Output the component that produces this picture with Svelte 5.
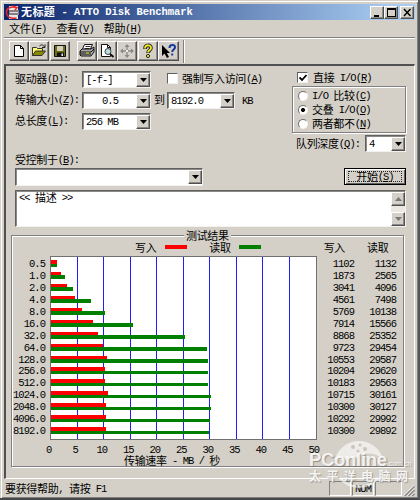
<script lang="ts">
  interface Result {
    size: string;
    write: number;
    read: number;
  }

  const results: Result[] = [
    { size: '0.5', write: 1102, read: 1132 },
    { size: '1.0', write: 1873, read: 2565 },
    { size: '2.0', write: 3041, read: 4096 },
    { size: '4.0', write: 4561, read: 7498 },
    { size: '8.0', write: 5769, read: 10138 },
    { size: '16.0', write: 7914, read: 15566 },
    { size: '32.0', write: 8868, read: 25352 },
    { size: '64.0', write: 9723, read: 29454 },
    { size: '128.0', write: 10553, read: 29587 },
    { size: '256.0', write: 10204, read: 29620 },
    { size: '512.0', write: 10183, read: 29563 },
    { size: '1024.0', write: 10715, read: 30161 },
    { size: '2048.0', write: 10300, read: 30127 },
    { size: '4096.0', write: 10292, read: 29992 },
    { size: '8192.0', write: 10300, read: 29892 }
  ];

  const ticks = [0, 5, 10, 15, 20, 25, 30, 35, 40, 45, 50];
  const ioModes = ['I/O 比较(&C)', '交叠 I/O(&O)', '两者都不(&N)'];

  let mode = $state(1);
  let direct = $state(true);
  let force = $state(false);

  // splits a caption into CJK runs, latin runs and &X accelerators
  function runs(s: string) {
    return s.match(/&.|[\u3000-\u9fff\uff00-\uffef]+|[^&\u3000-\u9fff\uff00-\uffef]+/g) ?? [];
  }

  const barWidth = (v: number) => `${(v / 50000) * 100}%`;
</script>

{#snippet txt(s: string)}
  <span class="txt">{#each runs(s) as r}{#if r[0] === '&'}<span class="lat key">{r[1]}</span>{:else if r.charCodeAt(0) > 0x2fff}<span class="cjk">{r}</span>{:else}<span class="lat">{r}</span>{/if}{/each}</span>
{/snippet}

{#snippet combo(value: string, cls: string)}
  <div class="combo {cls}">
    <div class="combo-value">{@render txt(value)}</div>
    <button class="arrow" aria-label="open"><svg width="7" height="4" viewBox="0 0 7 4"><path d="M0 0h7L3.500 4z" fill="#000" /></svg></button>
  </div>
{/snippet}

<div class="window">
  <header class="titlebar">
    <svg class="app-icon" width="15" height="15" viewBox="0 0 15 15">
      <rect x="4" y="1" width="9" height="13" fill="#e9e4e4" />
      <rect x="4" y="5" width="10" height="5" fill="#8a7f80" />
      <path d="M5 7.500h8" stroke="#ddd" />
      <path d="M12 2.500C5 .5 1 4 1.500 8s4 6 10 5M7.500 1l4.500 1.500-2 2.500" fill="none" stroke="#e8262c" stroke-width="1.500" />
    </svg>
    <h1>{@render txt('无标题 - ATTO Disk Benchmark')}</h1>
    <div class="caption-buttons">
      <button aria-label="minimize"><svg width="11" height="9"><path d="M2 7h5v2H2z" /></svg></button>
      <button aria-label="maximize"><svg width="11" height="9"><path d="M1 0h9v9H1zM2 2v6h7V2z" fill-rule="evenodd" /></svg></button>
      <button class="close" aria-label="close"><svg width="11" height="9"><path d="M2 1l6.500 7M8.500 1L2 8" stroke="#000" stroke-width="1.500" /></svg></button>
    </div>
  </header>

  <nav class="menu">
    {@render txt('文件(&F)')}
    {@render txt('查看(&V)')}
    {@render txt('帮助(&H)')}
  </nav>

  <div class="toolbar">
    <button aria-label="new"><svg width="16" height="16" viewBox="0 0 16 16"><path d="M3.500 2.500h6l3 3v8h-9z" fill="#fff" stroke="#000" /><path d="M9.500 2.500v3h3" fill="none" stroke="#000" /></svg></button>
    <button aria-label="open"><svg width="16" height="16" viewBox="0 0 16 16"><path d="M1.500 12.500v-8h4l1 1h5v2.500" fill="#ffff70" stroke="#333" /><path d="M1.500 12.500l3-4.500h10l-3.500 4.500z" fill="#8a8a00" stroke="#333" /><path d="M8.500 3c2-2 4-1 5 1M14 1.500v3h-3" fill="none" stroke="#222" /></svg></button>
    <button aria-label="save"><svg width="16" height="16" viewBox="0 0 16 16"><path d="M2.500 2.500h11v11h-11z" fill="#6f7008" stroke="#111" /><path d="M5 3h6v5H5z" fill="#d4d0c8" /><path d="M5 9.500h7V13H5z" fill="#111" /><path d="M9.500 10.500h1.500V13H9.500z" fill="#eee" /></svg></button>
    <button class="gap" aria-label="print"><svg width="16" height="16" viewBox="0 0 16 16"><path d="M5.500 1.500h8L11 7H3z" fill="#fff" stroke="#111" /><path d="M6.500 3.500h5M5.500 5.500h5" stroke="#333" /><path d="M1 8l2-2h9l3-2v5l-3 4H2l-1-1z" fill="#aaa" stroke="#111" /><path d="M1 9h11l3-3M1 11h11" fill="none" stroke="#111" /><path d="M7 10h3" stroke="#e8e000" /></svg></button>
    <button aria-label="preview"><svg width="16" height="16" viewBox="0 0 16 16"><path d="M2.500 1.500h6l3 3v9h-9z" fill="#fff" stroke="#111" /><path d="M8.500 1.500v3h3" fill="none" stroke="#111" /><circle cx="9" cy="8.500" r="3" fill="#b8dede" stroke="#444" /><path d="M11 11l3.500 3" stroke="#111" stroke-width="2" /></svg></button>
    <button aria-label="move"><svg width="16" height="16" viewBox="0 0 16 16"><path d="M8 2v12M2 8h12" stroke="#888" stroke-width="1.300" /><path d="M5.500 4L8 1l2.500 3zM5.500 12L8 15l2.500-3zM4 5.500L1 8l3 2.500zM12 5.500L15 8l-3 2.500z" fill="#888" /><path d="M7 7h2v2H7z" fill="#eee" /></svg></button>
    <button aria-label="help"><svg width="16" height="16" viewBox="0 0 16 16"><path d="M5 6c0-5 6.500-4.500 6-.8C10.800 7.500 8 7.200 8 10" fill="none" stroke="#222" stroke-width="3.600" /><path d="M5 5.500c0-4.500 6.500-4 6-.3C10.800 7.500 8 7.200 8 9.500" fill="none" stroke="#f1ec20" stroke-width="1.800" /><circle cx="8" cy="13" r="1.600" fill="#f1ec20" stroke="#222" /></svg></button>
    <button class="wide" aria-label="context help"><svg width="17" height="16" viewBox="0 0 17 16"><path d="M2 2v11l2.500-2.500L7 15l2-1-2.200-4H10z" fill="#000" /><path d="M9.500 5c0-4 6-4 5.500-.5-.3 2-2.800 2-2.800 4.500" fill="none" stroke="#163a9c" stroke-width="2" /><path d="M11.200 10.500h2v2h-2z" fill="#163a9c" /></svg></button>
    <i class="divider"></i>
  </div>

  <main class="client">
    <div class="settings">
      <div class="left">
        <span>{@render txt('驱动器(&D):')}</span>
        {@render combo('[-f-]', '')}
        <label class="check force">
          <input type="checkbox" bind:checked={force} /><i class="box"></i>
          {@render txt('强制写入访问(&A)')}
        </label>

        <span>{@render txt('传输大小(&Z):')}</span>
        {@render combo('   0.5', '')}
        <span class="to">{@render txt('到')}</span>
        {@render combo('8192.0', '')}
        <span class="unit">{@render txt('KB')}</span>

        <span>{@render txt('总长度(&L):')}</span>
        {@render combo('256 MB', '')}
      </div>

      <div class="right">
        <label class="check direct">
          <input type="checkbox" bind:checked={direct} /><i class="box">{#if direct}<svg width="8" height="8" viewBox="0 0 8 8"><path d="M.5 3.500L3 6l4.500-5" fill="none" stroke="#000" stroke-width="1.800" /></svg>{/if}</i>
          {@render txt('直接 I/O(&R)')}
        </label>
        <div class="modes">
          {#each ioModes as m, i}
            <label class="check">
              <input type="radio" name="mode" value={i} bind:group={mode} /><i class="dot" class:on={mode === i}></i>
              {@render txt(m)}
            </label>
          {/each}
        </div>
        <div class="depth">
          {@render txt('队列深度(&Q):')}
          {@render combo('4', 'small')}
        </div>
      </div>
    </div>

    <div class="controlled">{@render txt('受控制于(&B):')}</div>
    <div class="start-row">
      {@render combo('', 'long')}
      <button class="start"><span>{@render txt('开始(&S)')}</span></button>
    </div>

    <div class="memo">
      <div class="memo-text">{@render txt('<< 描述 >>')}</div>
      <div class="scroll">
        <button class="arrow" aria-label="up"><svg width="7" height="4"><path d="M0 4h7L3.500 0z" fill="#777" /></svg></button>
        <button class="arrow" aria-label="down"><svg width="7" height="4"><path d="M0 0h7L3.500 4z" fill="#777" /></svg></button>
      </div>
    </div>

    <fieldset>
      <legend>{@render txt('测试结果')}</legend>
      <div class="heads">
        <span class="lg-write">{@render txt('写入')}</span><i class="swatch write"></i>
        <span class="lg-read">{@render txt('读取')}</span><i class="swatch read"></i>
        <span class="th-write">{@render txt('写入')}</span>
        <span class="th-read">{@render txt('读取')}</span>
      </div>
      <div class="chart">
        <div class="col sizes">
          {#each results as r}<div>{@render txt(r.size)}</div>{/each}
        </div>
        <div class="plot">
          {#each results as r}
            <div class="pair">
              <div class="bar write" style:width={barWidth(r.write)}></div>
              <div class="bar read" style:width={barWidth(r.read)}></div>
            </div>
          {/each}
        </div>
        <div class="col writes">
          {#each results as r}<div>{@render txt(String(r.write))}</div>{/each}
        </div>
        <div class="col reads">
          {#each results as r}<div>{@render txt(String(r.read))}</div>{/each}
        </div>
      </div>
      <div class="axis">
        {#each ticks as t}<span>{@render txt(String(t))}</span>{/each}
      </div>
      <div class="axis-title">{@render txt('传输速率 - MB / 秒')}</div>
    </fieldset>
  </main>

  <footer class="status">
    <span class="message">{@render txt('要获得帮助, 请按 F1')}</span>
    <span class="pane"></span>
    <span class="pane num">{@render txt('NUM')}</span>
    <span class="pane last"></span>
    <svg class="grip" width="12" height="13" viewBox="0 0 13 13">
      <path d="M1 12L12 1M5 12l7-7M9 12l3-3" stroke="#fff" stroke-width="1" />
      <path d="M2 12.500L12.500 2M6 12.500L12.500 6M10 12.500l2.500-2.500" stroke="#808080" stroke-width="1.400" />
    </svg>
  </footer>

  <div class="watermark" aria-hidden="true">
    <svg width="52" height="52" viewBox="0 0 52 52">
      <path d="M2 21A25 25 0 0 1 50 21Q38 12 26 18T2 21z" fill="#fff" opacity=".6" />
      <path d="M7 40A25 25 0 0 0 45 40" fill="none" stroke="#fff" stroke-width="2.500" opacity=".6" />
      <g fill="#c9c5bd"><circle cx="20" cy="9" r="2" /><circle cx="27" cy="7" r="1.500" /><circle cx="32" cy="11" r="2" /><circle cx="25" cy="13" r="1.500" /></g>
    </svg>
    <div class="brand"><b>PConline</b><small>.com.cn</small></div>
    <div class="brand-cn">太平洋电脑网</div>
  </div>
</div>

<style>
  :global(body) {
    margin: 0;
    overflow: hidden;
  }

  .window,
  .window * {
    box-sizing: border-box;
  }

  .window {
    position: relative;
    width: 420px;
    height: 500px;
    display: flex;
    flex-direction: column;
    padding: 4px 3px 0 4px;
    background: #d4d0c8;
    border-right: 2px solid #55565a;
    border-bottom: 2px solid #45464a;
    box-shadow: inset 1px 1px #d4d0c8, inset 2px 2px #fff, inset -1px -1px #808080;
    color: #000;
    font: 11px/12px 'Liberation Mono', 'Noto Sans CJK SC', monospace;
  }

  button {
    display: flex;
    align-items: center;
    justify-content: center;
    padding: 0;
    background: #d4d0c8;
    border: 1px solid;
    border-color: #fff #505050 #505050 #fff;
    box-shadow: inset -1px -1px #8c8a86;
  }

  svg {
    display: block;
    flex: none;
  }

  /* text runs */
  .txt {
    display: inline-flex;
    align-items: center;
    height: 12px;
    line-height: 12px;
    white-space: pre;
  }

  .cjk {
    margin-bottom: 2px;
    font: 11px/12px 'Noto Sans CJK SC', sans-serif;
    letter-spacing: -0.33px;
  }

  .lat {
    font: 10.5px/12px 'Liberation Mono', monospace;
    letter-spacing: -0.97px;
  }

  .key {
    text-decoration: underline;
    text-underline-offset: 1px;
  }

  .titlebar {
    display: flex;
    align-items: center;
    flex: none;
    height: 16px;
    padding: 0 1px;
    background: linear-gradient(90deg, #0a246a, #a6caf0 94%);
    color: #fff;
  }

  h1 {
    flex: 1;
    display: flex;
    margin: 0 0 0 1px;
    font-size: 11px;
  }

  h1 :global(.cjk) {
    font-weight: 700;
    letter-spacing: 0.4px;
  }

  h1 :global(.lat) {
    font-weight: 700;
    letter-spacing: -0.05px;
  }

  .caption-buttons {
    display: flex;
  }

  .caption-buttons button {
    width: 14px;
    height: 13px;
  }

  .caption-buttons .close {
    margin-left: 2px;
  }

  .menu {
    display: flex;
    gap: 10px;
    flex: none;
    height: 18px;
    padding: 3px 0 0 5px;
    border-bottom: 1px solid #808080;
    box-shadow: 0 1px #fff;
  }

  .toolbar {
    display: flex;
    flex: none;
    height: 26px;
    padding: 3px 0 0 5px;
  }

  .toolbar button {
    width: 20px;
    height: 20px;
    margin-right: 0.3px;
  }

  .toolbar .gap {
    margin-left: 7px;
  }

  .toolbar .wide {
    width: 21px;
  }

  .divider {
    width: 2px;
    margin: -1px 0 1px 4px;
    border-left: 1px solid #808080;
    border-right: 1px solid #fff;
  }

  .client {
    flex: none;
    height: 415px;
    padding: 3px 0 0 9px;
    border: solid;
    border-width: 2px 1px 1px 2px;
    border-color: #505050 #fff #fff #505050;
  }

  .settings {
    display: flex;
    height: 85px;
  }

  .left {
    display: grid;
    grid-template: repeat(3, 21px) / 67px 69px 16px 68px 40px;
    align-items: center;
    width: 277px;
    align-content: start;
  }

  .to {
    padding-left: 3px;
  }

  .unit {
    padding-left: 7px;
  }

  .combo {
    display: flex;
    height: 17px;
    background: #fff;
    border: 1px solid;
    border-color: #606060 #f4f2ee #f4f2ee #606060;
    box-shadow: inset 1px 1px #8c8a86;
  }

  .combo-value {
    flex: 1;
    display: flex;
    align-items: center;
    padding: 1px 0 0 3px;
  }

  .arrow {
    flex: none;
    width: 14px;
    height: 14px;
    margin-top: 1px;
  }

  .check {
    display: flex;
    align-items: center;
  }

  .check input {
    position: absolute;
    opacity: 0;
    pointer-events: none;
  }

  .force {
    grid-column: 3 / -1;
    padding: 0 0 2px 16px;
  }

  .box {
    display: flex;
    align-items: center;
    justify-content: center;
    width: 11px;
    height: 11px;
    margin-right: 4px;
    background: #fff;
    border: 1px solid;
    border-color: #606060 #f4f2ee #f4f2ee #606060;
  }

  .right {
    width: 114px;
  }

  .direct {
    height: 17px;
    padding-left: 5px;
  }

  .direct .box {
    margin-right: 5px;
  }

  .modes {
    display: flex;
    flex-direction: column;
    justify-content: space-between;
    height: 47px;
    padding: 3px 0 2px 5px;
    border: 1px solid #808080;
    box-shadow: inset 1px 1px #fff, 1px 1px #fff;
  }

  .dot {
    display: flex;
    width: 10px;
    height: 10px;
    margin-right: 4px;
    border-radius: 50%;
    background: #fff;
    border: 1px solid;
    border-color: #707070 #f4f2ee #f4f2ee #707070;
  }

  .dot.on {
    background: radial-gradient(circle, #000 1.7px, #fff 2.3px);
  }

  .depth {
    display: flex;
    align-items: center;
    justify-content: space-between;
    height: 17px;
    margin-top: 2px;
    padding-left: 4px;
  }

  .small {
    width: 41px;
  }

  .controlled {
    height: 14px;
  }

  .start-row {
    display: flex;
    justify-content: space-between;
    width: 391px;
    height: 22px;
  }

  .long {
    width: 188px;
    height: 18px;
  }

  .start {
    width: 62px;
    height: 17px;
    padding: 1px;
    border: 1px solid #000;
    box-shadow: inset 1px 1px #fff, inset -1px -1px #606060;
  }

  .start > span {
    display: flex;
    align-items: center;
    justify-content: center;
    width: 54px;
    height: 11px;
    border: 1px dotted #222;
  }

  .memo {
    display: flex;
    justify-content: space-between;
    width: 391px;
    height: 37px;
    background: #fff;
    border: 1px solid;
    border-color: #606060 #f4f2ee #f4f2ee #606060;
    box-shadow: inset 1px 1px #8c8a86;
  }

  .memo-text {
    padding: 1px 0 0 3px;
  }

  .scroll {
    display: flex;
    flex-direction: column;
    justify-content: space-between;
    width: 14px;
    margin-top: 1px;
    background: #ebe8e2;
  }

  .scroll .arrow {
    margin: 0;
  }

  fieldset {
    width: 393px;
    height: 237px;
    min-width: 0;
    margin: 3px 0 0 -4px;
    padding: 0;
    border: 1px solid #808080;
    box-shadow: inset 1px 1px #fff, 1px 1px #fff;
  }

  legend {
    display: flex;
    height: 11px;
    margin-left: 172px;
    padding: 0 2px;
    background: #d4d0c8;
  }

  .heads {
    display: flex;
    height: 15px;
    padding: 1px 0 0 123px;
  }

  .swatch {
    width: 22px;
    height: 4px;
    margin: 3px 22px 0 9px;
  }

  .swatch.read {
    margin: 3px 63px 0 8px;
  }

  .th-read {
    margin-left: 22px;
  }

  .write {
    background: #f00;
  }

  .read {
    background: #008000;
  }

  .chart {
    display: flex;
    height: 184px;
  }

  .col {
    display: grid;
    grid-auto-rows: 11.95px;
    padding: 2px 1px 0 0;
    justify-items: end;
  }

  .col > div {
    height: 12px;
  }

  .sizes {
    width: 34px;
  }

  .plot {
    width: 267px;
    margin-left: 4px;
    padding-top: 3px;
    background: #fff repeating-linear-gradient(90deg, transparent 0 26px, #2020f4 26px 27px, transparent 27px 52px, #2020f4 52px 53px) 0 0 / 262px 100% no-repeat;
    border: 1px solid #707070;
  }

  .pair {
    height: 11.95px;
  }

  .bar {
    height: 3.5px;
  }

  .writes {
    width: 38px;
  }

  .reads {
    width: 42px;
  }

  .axis {
    display: flex;
    height: 15px;
    margin-left: 23.500px;
    padding-top: 4px;
  }

  .axis span {
    display: flex;
    justify-content: center;
  }

  .axis > span {
    width: 26.500px;
    flex: none;
  }

  .axis-title {
    padding-left: 112px;
  }

  .status {
    display: flex;
    flex: none;
    height: 19px;
    padding-top: 2px;
  }

  .message {
    flex: 1;
    padding: 2px 0 0 1px;
  }

  .pane {
    width: 22px;
    height: 15px;
    margin-right: 1px;
    border: 1px solid;
    border-color: #808080 #fff #fff #808080;
  }

  .num {
    display: flex;
    justify-content: center;
    align-items: center;
  }

  .last {
    width: 27px;
  }

  .grip {
    margin: 3px 0 0;
  }

  /* sits over the chart and the status bar */
  .watermark {
    position: absolute;
    left: 309px;
    top: 438px;
    width: 104px;
    height: 52px;
    color: rgba(255, 255, 255, 0.85);
  }

  .watermark svg {
    position: absolute;
    left: 24px;
    top: 0;
  }

  .brand {
    position: relative;
    display: flex;
    align-items: baseline;
    height: 31px;
    padding-top: 13px;
    line-height: 18px;
    font-family: 'Liberation Sans', sans-serif;
    text-shadow: 1px 1px 1px rgba(110, 105, 98, 0.6);
  }

  .brand b {
    font-size: 18.500px;
    letter-spacing: -0.3px;
  }

  .brand small {
    font-size: 7px;
  }

  .brand-cn {
    position: relative;
    font: 700 12px/14px 'Noto Sans CJK SC', sans-serif;
    letter-spacing: 5.4px;
    white-space: nowrap;
    text-shadow: 1px 1px 1px rgba(110, 105, 98, 0.5);
  }
</style>
